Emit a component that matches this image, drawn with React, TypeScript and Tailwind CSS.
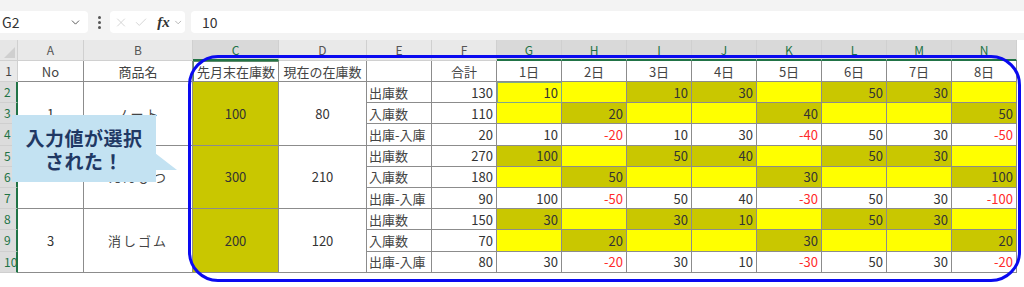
import { ChevronDown, X, Check } from 'lucide-react';

type Fill = 'y' | 'o' | 'w';
type Cell = [string, Fill];

const Y: Cell = ['', 'y'];
const o = (v: string): Cell => [v, 'o'];
const w = (v: string): Cell => [v, 'w'];

// G..N values per item: 出庫数 / 入庫数 / 出庫-入庫
const items = [
  {
    no: '1', name: 'ノート', last: '100', now: '80',
    rows: [
      { label: '出庫数', total: '130', cells: [['10', 'y'] as Cell, Y, o('10'), o('30'), Y, o('50'), o('30'), Y] },
      { label: '入庫数', total: '110', cells: [Y, o('20'), Y, Y, o('40'), Y, Y, o('50')] },
      { label: '出庫-入庫', total: '20', cells: ['10', '-20', '10', '30', '-40', '50', '30', '-50'].map(w) },
    ],
  },
  {
    no: '2', name: 'えんぴつ', last: '300', now: '210',
    rows: [
      { label: '出庫数', total: '270', cells: [o('100'), Y, o('50'), o('40'), Y, o('50'), o('30'), Y] },
      { label: '入庫数', total: '180', cells: [Y, o('50'), Y, Y, o('30'), Y, Y, o('100')] },
      { label: '出庫-入庫', total: '90', cells: ['100', '-50', '50', '40', '-30', '50', '30', '-100'].map(w) },
    ],
  },
  {
    no: '3', name: '消しゴム', last: '200', now: '120',
    rows: [
      { label: '出庫数', total: '150', cells: [o('30'), Y, o('30'), o('10'), Y, o('50'), o('30'), Y] },
      { label: '入庫数', total: '70', cells: [Y, o('20'), Y, Y, o('30'), Y, Y, o('20')] },
      { label: '出庫-入庫', total: '80', cells: ['30', '-20', '30', '10', '-30', '50', '30', '-20'].map(w) },
    ],
  },
];

const cols = ['A', 'B', 'C', 'D', 'E', 'F', 'G', 'H', 'I', 'J', 'K', 'L', 'M', 'N'];
const selectedCols = ['C', 'G', 'H', 'I', 'J', 'K', 'L', 'M', 'N'];
const days = ['1日', '2日', '3日', '4日', '5日', '6日', '7日', '8日'];

const fillClass = (f: Fill) =>
  f === 'y' ? 'bg-[#ffff00]' : f === 'o' ? 'bg-[#c9c700]' : 'bg-white';

export default function App() {
  let rowNo = 1;
  return (
    <div
      className="relative w-[1024px] h-[287px] overflow-hidden bg-[#f3f3f3] text-[#333]"
      style={{ fontFamily: '"Noto Sans CJK JP", "Noto Sans", sans-serif' }}
    >
      {/* formula bar */}
      <div className="flex items-center h-[33px] pt-[11px] gap-[6px]">
        <div className="flex items-center justify-between w-[88px] h-[22px] bg-white rounded-r-[4px] pl-[2px] pr-[6px] text-[14px] leading-none">
          <span>G2</span>
          <ChevronDown size={13} strokeWidth={1.6} className="text-[#444]" />
        </div>
        <div className="flex flex-col gap-[2px] items-center w-[10px]">
          <span className="w-[3px] h-[3px] rounded-full bg-[#555]" />
          <span className="w-[3px] h-[3px] rounded-full bg-[#555]" />
          <span className="w-[3px] h-[3px] rounded-full bg-[#555]" />
        </div>
        <div className="flex items-center gap-[6px] w-[75px] h-[22px] bg-white rounded-[4px] pl-[4px] pr-[2px]">
          <X size={15} strokeWidth={1.2} className="text-[#c4c4c4]" />
          <Check size={15} strokeWidth={1.2} className="text-[#c4c4c4]" />
          <span
            className="text-[15px] italic font-bold leading-none text-[#333] ml-[3px]"
            style={{ fontFamily: '"Liberation Serif", serif' }}
          >
            fx
          </span>
          <ChevronDown size={11} strokeWidth={1.4} className="text-[#888] -ml-[3px]" />
        </div>
        <div className="flex-1 flex items-center h-[22px] bg-white rounded-l-[4px] pl-[11px] text-[14px] leading-none">
          10
        </div>
      </div>

      {/* sheet */}
      <div className="mt-[7px] bg-white h-[247px]">
        <div className="grid grid-cols-[18px_66px_109px_86px_88px_65px_65px_repeat(8,65px)] grid-rows-[21px_21px_repeat(9,21.2px)] text-[13px] leading-none">
          {/* column headers */}
          <div className="bg-[#e6e6e6] border-r border-b border-[#d0d0d0] flex items-end justify-end p-[2px]">
            <div className="w-0 h-0 border-l-[11px] border-l-transparent border-b-[11px] border-b-[#cfcfcf]" />
          </div>
          {cols.map((c) => {
            const sel = selectedCols.includes(c);
            return (
              <div
                key={c}
                className={`flex items-center justify-center text-[12px] border-r border-[#d0d0d0] ${
                  sel
                    ? 'bg-[#d9d9d9] text-[#217346] border-b-2 border-b-[#217346]'
                    : 'bg-[#e9e9e9] text-[#555] border-b border-b-[#d0d0d0]'
                }`}
              >
                {c}
              </div>
            );
          })}

          {/* row 1 */}
          <div className="bg-[#e9e9e9] text-[12px] text-[#444] flex items-center justify-center border-r border-b border-[#d0d0d0]">
            1
          </div>
          {['No', '商品名', '先月末在庫数', '現在の在庫数', '', '合計', ...days].map((t, i) => (
            <div
              key={i}
              className={`flex items-center justify-center border-r border-b border-[#8c8c8c] text-[#444] ${
                i === 2 ? 'border-l border-l-[#5d8a6c] border-t border-t-[#5d8a6c]' : ''
              }`}
            >
              {t}
            </div>
          ))}

          {/* rows 2..10 */}
          {items.map((it) =>
            it.rows.map((r, ri) => {
              rowNo += 1;
              const rowHead = (
                <div
                  key={`rh${rowNo}`}
                  className="bg-[#dcdcdc] text-[12px] text-[#217346] flex items-center justify-start pl-[4px] border-b border-[#cfcfcf] border-r-2 border-r-[#217346]"
                >
                  {rowNo}
                </div>
              );
              const merged =
                ri === 0
                  ? [
                      <div key={`a${rowNo}`} className="row-span-3 flex items-center justify-center border-r border-b border-[#8c8c8c]">{it.no}</div>,
                      <div key={`b${rowNo}`} className="row-span-3 flex items-center justify-center border-r border-b border-[#8c8c8c] text-[#444] tracking-[2px]">{it.name}</div>,
                      <div key={`c${rowNo}`} className="row-span-3 flex items-center justify-center border-r border-b border-[#8c8c8c] bg-[#c9c700]">{it.last}</div>,
                      <div key={`d${rowNo}`} className="row-span-3 flex items-center justify-center border-r border-b border-[#8c8c8c]">{it.now}</div>,
                    ]
                  : [];
              return [
                rowHead,
                ...merged,
                <div key={`e${rowNo}`} className="flex items-center pl-[2px] border-r border-b border-[#8c8c8c] text-[#444]">{r.label}</div>,
                <div key={`f${rowNo}`} className="flex items-center justify-end pr-[3px] border-r border-b border-[#8c8c8c]">{r.total}</div>,
                ...r.cells.map(([v, f], ci) => (
                  <div
                    key={`g${rowNo}-${ci}`}
                    className={`flex items-center justify-end pr-[3px] border-r border-b border-[#8c8c8c] ${fillClass(f)} ${
                      v.startsWith('-') ? 'text-[#ff2a2a]' : 'text-[#333]'
                    } ${rowNo === 2 && ci === 0 ? 'outline outline-1 outline-[#7fa88a] -outline-offset-1' : ''}`}
                  >
                    {v}
                  </div>
                )),
              ];
            })
          )}
        </div>
      </div>

      {/* blue highlight frame */}
      <div className="absolute z-10 left-[188px] top-[55px] w-[833px] h-[227px] border-[3px] border-[#0a0af0] rounded-[30px] pointer-events-none" />

      {/* callout */}
      <div className="absolute z-20 left-[12px] top-[115px] w-[144px] h-[67px] bg-[#c3e2f2] flex flex-col items-center justify-center text-[19px] font-bold leading-[23px] text-[#1f3864] tracking-[0.5px]">
        <span>入力値が選択</span>
        <span>された！</span>
      </div>
      <svg className="absolute z-20 left-[155px] top-[150px]" width="24" height="32" viewBox="0 0 24 32">
        <polygon points="0,3 22,20 0,20" fill="#c3e2f2" />
      </svg>
    </div>
  );
}
